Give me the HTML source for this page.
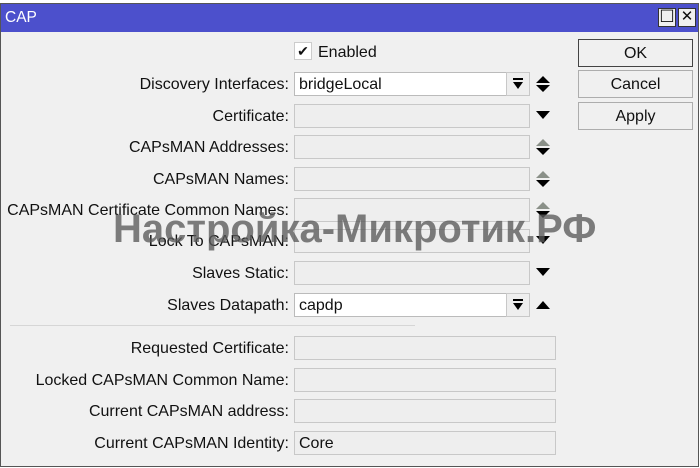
<!DOCTYPE html>
<html><head><style>
body{margin:0;width:700px;height:468px;overflow:hidden;background:#fff;font-family:"Liberation Sans",Arial,sans-serif;font-size:16px;color:#111}
.win{position:absolute;left:0;top:3px;width:699px;height:464px;background:#f0f0f0;border:1px solid #555;box-sizing:border-box}
.title{position:absolute;left:0;top:0;right:0;height:28px;background:#4c50cc;color:#fff;font-size:15.5px;line-height:28px;padding-left:4px}
.tb{position:absolute;top:4px;width:18px;height:19px;background:#f0f0f0;border:1px solid #333;box-sizing:border-box;color:#111;text-align:center;line-height:16px;font-size:17px}
.lbl{position:absolute;right:411px;white-space:nowrap;line-height:25px}
.f{position:absolute;height:24px;border:1px solid #c8c8c8;box-sizing:border-box;background:#eeeeee;line-height:23px;padding-left:4px}
.fw{background:#fff;border-color:#bbb}
.dd{position:absolute;width:24px;height:24px;border:1px solid #c8c8c8;box-sizing:border-box;background:#eee}
.btn{position:absolute;left:578px;width:115px;height:28px;border:1px solid #adadad;box-sizing:border-box;background:#f0f0f0;text-align:center;line-height:27px}
.ar{position:absolute}
</style></head><body>
<div class="win">
<div class="title">CAP<div class="tb" style="right:22px">☐</div><div class="tb" style="right:2px;font-size:15px">✕</div></div>
</div>
<div style="position:absolute;left:294px;top:42px;width:18px;height:18px;background:#fff;border:1px solid #ccc;box-sizing:border-box;font-size:14px;line-height:16px;text-align:center">✔</div>
<div style="position:absolute;left:318px;top:40px;line-height:25px">Enabled</div>

<div class="btn" style="top:39px;border-color:#444">OK</div>
<div class="btn" style="top:70px">Cancel</div>
<div class="btn" style="top:102px">Apply</div>

<div class="lbl" style="top:72px">Discovery Interfaces:</div>
<div class="f fw" style="left:294px;top:72px;width:213px">bridgeLocal</div>
<div class="dd" style="left:506px;top:72px"></div>
<svg class="ar" style="left:511px;top:77px" width="14" height="14"><rect x="2" y="1" width="10" height="2"/><path d="M2 5h10l-5 7z"/></svg>
<svg class="ar" style="left:535px;top:75px" width="16" height="18"><path d="M1 8h14L8 1zM1 10h14l-7 7z"/></svg>

<div class="lbl" style="top:104px">Certificate:</div>
<div class="f" style="left:294px;top:104px;width:236px"></div>
<svg class="ar" style="left:535px;top:109px" width="16" height="12"><path d="M1 2h14l-7 8z"/></svg>

<div class="lbl" style="top:135px">CAPsMAN Addresses:</div>
<div class="f" style="left:294px;top:135px;width:236px"></div>
<svg class="ar" style="left:535px;top:138px" width="16" height="18"><path d="M1 8h14L8 1z" fill="#8a9088"/><path d="M1 10h14l-7 7z"/></svg>

<div class="lbl" style="top:167px">CAPsMAN Names:</div>
<div class="f" style="left:294px;top:167px;width:236px"></div>
<svg class="ar" style="left:535px;top:170px" width="16" height="18"><path d="M1 8h14L8 1z" fill="#8a9088"/><path d="M1 10h14l-7 7z"/></svg>

<div class="lbl" style="top:198px">CAPsMAN Certificate Common Names:</div>
<div class="f" style="left:294px;top:198px;width:236px"></div>
<svg class="ar" style="left:535px;top:201px" width="16" height="18"><path d="M1 8h14L8 1z" fill="#8a9088"/><path d="M1 10h14l-7 7z"/></svg>

<div class="lbl" style="top:229px">Lock To CAPsMAN:</div>
<div class="f" style="left:294px;top:229px;width:236px"></div>
<svg class="ar" style="left:535px;top:234px" width="16" height="12"><path d="M1 2h14l-7 8z"/></svg>

<div class="lbl" style="top:261px">Slaves Static:</div>
<div class="f" style="left:294px;top:261px;width:236px"></div>
<svg class="ar" style="left:535px;top:266px" width="16" height="12"><path d="M1 2h14l-7 8z"/></svg>

<div class="lbl" style="top:293px">Slaves Datapath:</div>
<div class="f fw" style="left:294px;top:293px;width:213px">capdp</div>
<div class="dd" style="left:506px;top:293px"></div>
<svg class="ar" style="left:511px;top:298px" width="14" height="14"><rect x="2" y="1" width="10" height="2"/><path d="M2 5h10l-5 7z"/></svg>
<svg class="ar" style="left:535px;top:299px" width="16" height="12"><path d="M1 10h14L8 2z"/></svg>

<div style="position:absolute;left:10px;top:325px;width:405px;height:1px;background:#d6d6d6"></div>

<div class="lbl" style="top:336px">Requested Certificate:</div>
<div class="f" style="left:294px;top:336px;width:262px"></div>
<div class="lbl" style="top:368px">Locked CAPsMAN Common Name:</div>
<div class="f" style="left:294px;top:368px;width:262px"></div>
<div class="lbl" style="top:399px">Current CAPsMAN address:</div>
<div class="f" style="left:294px;top:399px;width:262px"></div>
<div class="lbl" style="top:431px">Current CAPsMAN Identity:</div>
<div class="f" style="left:294px;top:431px;width:262px">Core</div>

<div style="position:absolute;left:113px;top:207px;font-size:40px;font-weight:bold;color:rgba(90,90,90,0.78);white-space:nowrap">Настройка-Микротик.РФ</div>
</body></html>
